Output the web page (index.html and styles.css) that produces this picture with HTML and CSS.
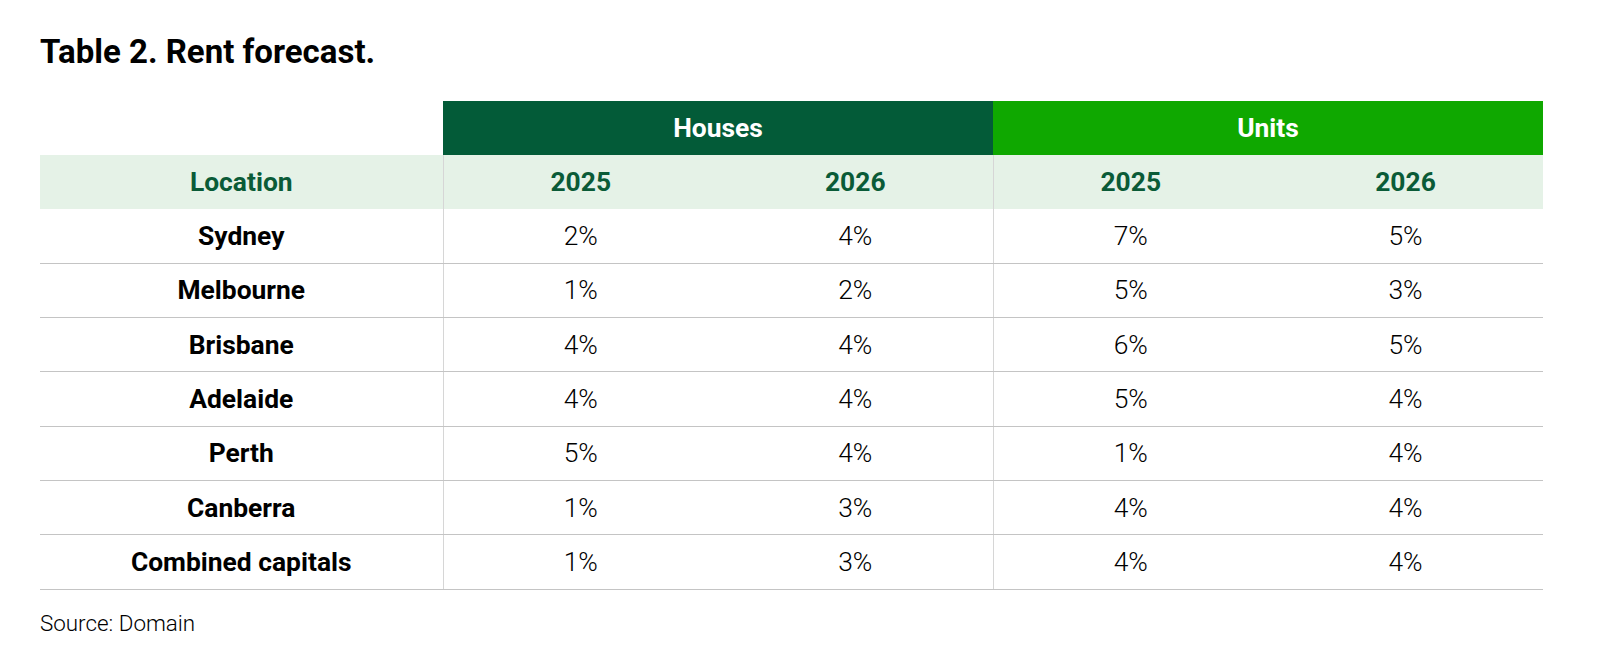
FILE: index.html
```html
<!DOCTYPE html>
<html lang="en">
<head>
<meta charset="utf-8">
<title>Table 2. Rent forecast.</title>
<link rel="stylesheet" href="styles.css">
</head>
<body>
<main class="page">
  <h2 class="title">Table 2. Rent forecast.</h2>
  <table class="forecast">
    <colgroup>
      <col class="c-loc">
      <col class="c-val"><col class="c-val"><col class="c-val"><col class="c-val">
    </colgroup>
    <thead>
      <tr class="group-row">
        <th class="blank"></th>
        <th colspan="2" class="grp houses">Houses</th>
        <th colspan="2" class="grp units">Units</th>
      </tr>
      <tr class="sub-row">
        <th>Location</th>
        <th class="sep">2025</th>
        <th>2026</th>
        <th class="sep">2025</th>
        <th>2026</th>
      </tr>
    </thead>
    <tbody>
      <tr><th>Sydney</th><td class="sep">2%</td><td>4%</td><td class="sep">7%</td><td>5%</td></tr>
      <tr><th>Melbourne</th><td class="sep">1%</td><td>2%</td><td class="sep">5%</td><td>3%</td></tr>
      <tr><th>Brisbane</th><td class="sep">4%</td><td>4%</td><td class="sep">6%</td><td>5%</td></tr>
      <tr><th>Adelaide</th><td class="sep">4%</td><td>4%</td><td class="sep">5%</td><td>4%</td></tr>
      <tr><th>Perth</th><td class="sep">5%</td><td>4%</td><td class="sep">1%</td><td>4%</td></tr>
      <tr><th>Canberra</th><td class="sep">1%</td><td>3%</td><td class="sep">4%</td><td>4%</td></tr>
      <tr><th>Combined capitals</th><td class="sep">1%</td><td>3%</td><td class="sep">4%</td><td>4%</td></tr>
    </tbody>
  </table>
  <p class="source">Source: Domain</p>
</main>
</body>
</html>
```

FILE: styles.css
```css
html, body {
  margin: 0;
  padding: 0;
  background: #ffffff;
}

.page {
  padding: 32px 0 0 40px;
  font-family: Roboto, "Liberation Sans", Arial, sans-serif;
  color: #000;
}

.title {
  margin: 0;
  font-size: 33px;
  line-height: 40px;
  font-weight: 700;
  color: #000;
}

.forecast {
  margin-top: 29px;
  width: 1503px;
  border-collapse: collapse;
  table-layout: fixed;
  font-size: 26.4px;
}

.c-loc { width: 403px; }
.c-val { width: 275px; }

.forecast th,
.forecast td {
  padding: 0;
  text-align: center;
  vertical-align: middle;
}

.group-row th {
  height: 54px;
  font-weight: 700;
  color: #ffffff;
}

.group-row .blank { background: #ffffff; }
.group-row .houses { background: #035b38; }
.group-row .units { background: #0fa800; }

.sub-row th {
  height: 54px;
  background: #e5f2e7;
  color: #0a5b37;
  font-weight: 700;
}

.sub-row th.sep { border-left: 1px solid #d6d6d6; }

tbody tr { height: 54.3px; }

tbody th,
tbody td {
  border-bottom: 1px solid #c4c4c4;
}

tbody th {
  font-weight: 700;
  color: #000;
}

tbody td {
  font-weight: 300;
  color: #000;
}

tbody td.sep { border-left: 1px solid #d6d6d6; }

.source {
  margin: 20px 0 0;
  font-size: 22.4px;
  line-height: 26px;
  font-weight: 300;
  color: #000;
}
```
